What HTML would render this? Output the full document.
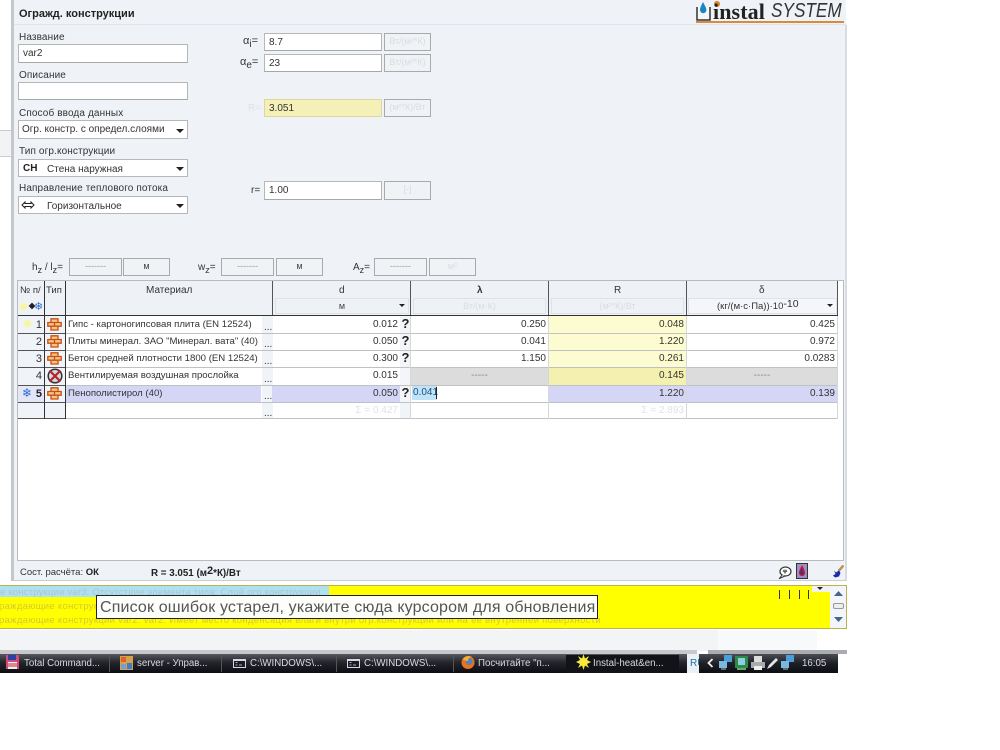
<!DOCTYPE html>
<html><head><meta charset="utf-8"><style>
html,body{margin:0;padding:0;background:#fff}
#r{position:relative;width:1000px;height:750px;overflow:hidden;background:#fff;font-family:"Liberation Sans","DejaVu Sans",sans-serif;font-size:9.5px;color:#333}
#r div,#r svg{position:absolute;box-sizing:border-box}
.t{white-space:nowrap;line-height:12px;margin-top:1px}
.l{font-size:10px;letter-spacing:.12px}
.i{background:#fff;border:1px solid #b4b8b8;border-bottom-color:#a5a8a8;font-size:10px;line-height:18px;padding-left:4px;color:#333;white-space:nowrap}
.u{background:#f0f3f6;border:1px solid #a8abab;color:#d9dde2;font-size:9px;text-align:center;line-height:15px;white-space:nowrap;overflow:hidden}
.s{background:#fff;border:1px solid #b4b8b8;font-size:10px;line-height:18px;padding-left:4px;white-space:nowrap;color:#333}
.a{width:0;height:0;border-left:4px solid transparent;border-right:4px solid transparent;border-top:4px solid #222}
.c{font-size:10px;line-height:18px;white-space:nowrap;overflow:hidden;color:#333}
.m{font-size:9.6px}
.n{text-align:right;padding-right:2px}
.q{font-family:"Liberation Sans",sans-serif;font-weight:bold;font-size:13px;line-height:14px;color:#222;width:9px;text-align:center}
.k{color:#d8dade;font-size:9.7px;line-height:14px;white-space:nowrap}
</style></head><body><div id="r">

<div style="left:11px;top:0;width:3px;height:581px;background:#c5c8cb"></div>
<div style="left:0;top:130px;width:11px;height:27px;background:#f2f3f4;border-top:1px solid #ccc;border-bottom:1px solid #ccc"></div>
<div style="left:14px;top:0;width:832px;height:581px;background:#eff3f8"></div>
<div style="left:845px;top:25px;width:2px;height:556px;background:#d8dce0"></div>
<div style="left:14px;top:24px;width:832px;height:1px;background:#dfe4ea"></div>
<div style="left:14px;top:580px;width:832px;height:1px;background:#c9ccd0"></div>

<div class="t" style="left:19px;top:7px;font-size:11px;font-weight:bold;color:#222">Огражд. конструкции</div>

<!-- logo -->
<svg style="left:696px;top:1px" width="16" height="20" viewBox="0 0 16 20"><path d="M1 6V19H14V6" fill="#f4f6f8" stroke="#333" stroke-width="1.500"/><path d="M7 1C5 5 4 7 4 9a3.200 3.200 0 0 0 6.400 0C10.400 7 9 5 7 1Z" fill="#1c84c4"/></svg>
<div style="left:714px;top:1px;width:6px;height:6px;border-radius:50%;background:#d9822b"></div>
<div style="left:713px;top:2px;font-family:'Liberation Serif',serif;font-weight:bold;font-size:22px;line-height:19px;color:#222;white-space:nowrap;letter-spacing:.1px">instal</div>
<div style="left:771px;top:1px;font-family:'Liberation Sans',sans-serif;font-style:italic;font-size:20px;line-height:20px;color:#333;white-space:nowrap;transform:scaleX(.86);transform-origin:left top">SYSTEM</div>
<div style="left:696px;top:21px;width:148px;height:2px;background:#d98a3a"></div>

<!-- left form -->
<div class="t l" style="left:19px;top:31px">Название</div>
<div class="i" style="left:18px;top:44px;width:170px;height:19px">var2</div>
<div class="t l" style="left:19px;top:69px">Описание</div>
<div class="i" style="left:18px;top:82px;width:170px;height:18px"></div>
<div class="t l" style="left:19px;top:107px">Способ ввода данных</div>
<div class="s" style="left:18px;top:120px;width:170px;height:19px;padding-left:3px">Огр. констр. с определ.слоями</div><div class="a" style="left:176px;top:129px"></div>
<div class="t l" style="left:19px;top:145px">Тип огр.конструкции</div>
<div class="s" style="left:18px;top:159px;width:170px;height:18px"><b style="color:#222">СН</b></div><div class="t" style="left:47px;top:163px;font-size:10px">Стена наружная</div><div class="a" style="left:176px;top:167px"></div>
<div class="t l" style="left:19px;top:182px">Направление теплового потока</div>
<div class="s" style="left:18px;top:196px;width:170px;height:18px"></div><div class="t" style="left:47px;top:200px;font-size:10px">Горизонтальное</div><div class="a" style="left:176px;top:204px"></div>
<svg style="left:21px;top:201px" width="14" height="8" viewBox="0 0 14 8"><path d="M4 1 1 4l3 3V5.500h6V7l3-3-3-3v1.500H4Z" fill="#fff" stroke="#222" stroke-width="1"/></svg>

<!-- right form -->
<div class="t" style="left:243px;top:34px;font-size:11px">α<sub style="font-size:10px;line-height:0">i</sub>=</div>
<div class="i" style="left:264px;top:33px;width:118px;height:18px">8.7</div>
<div class="u" style="left:384px;top:33px;width:47px;height:18px">Вт/(м²*К)</div>
<div class="t" style="left:240px;top:55px;font-size:11px">α<sub style="font-size:10px;line-height:0">e</sub>=</div>
<div class="i" style="left:264px;top:54px;width:118px;height:18px">23</div>
<div class="u" style="left:384px;top:54px;width:47px;height:18px">Вт/(м²*К)</div>
<div class="t" style="left:248px;top:102px;color:#dde1e6;font-size:10px">R=</div>
<div class="i" style="left:264px;top:99px;width:118px;height:18px;background:#f4f0b8;border-color:#d8d8a0">3.051</div>
<div class="u" style="left:384px;top:99px;width:47px;height:18px">(м²*К)/Вт</div>
<div class="t" style="left:251px;top:184px;font-size:10px;color:#333">r=</div>
<div class="i" style="left:264px;top:181px;width:118px;height:19px">1.00</div>
<div class="u" style="left:384px;top:181px;width:47px;height:19px">[-]</div>

<!-- hz row -->
<div class="t" style="left:32px;top:261px;font-size:10px">h<sub style="font-size:9px;line-height:0">z</sub> / l<sub style="font-size:9px;line-height:0">z</sub>=</div>
<div class="u" style="left:69px;top:258px;width:53px;height:18px;color:#999">-------</div>
<div class="u" style="left:123px;top:258px;width:47px;height:18px;color:#444">м</div>
<div class="t" style="left:198px;top:261px;font-size:10px">w<sub style="font-size:9px;line-height:0">z</sub>=</div>
<div class="u" style="left:221px;top:258px;width:53px;height:18px;color:#999">-------</div>
<div class="u" style="left:276px;top:258px;width:47px;height:18px;color:#444">м</div>
<div class="t" style="left:353px;top:261px;font-size:10px">A<sub style="font-size:9px;line-height:0">z</sub>=</div>
<div class="u" style="left:374px;top:258px;width:53px;height:18px;color:#999">-------</div>
<div class="u" style="left:429px;top:258px;width:47px;height:18px">м²</div>

<!-- table frame -->
<div style="left:17px;top:280px;width:827px;height:281px;background:#fff;border:1px solid #b8bcc0"></div>
<div style="left:18px;top:281px;width:820px;height:34px;background:#eef2f7"></div>

<!-- header -->
<div class="t" style="left:20px;top:284px">№ п/</div>
<div class="t" style="left:46px;top:284px">Тип</div>
<div class="t" style="left:146px;top:284px;font-size:10px">Материал</div>
<div class="t" style="left:339px;top:284px;font-size:10px">d</div>
<div class="t" style="left:477px;top:284px;font-size:10px;font-weight:bold">λ</div>
<div class="t" style="left:614px;top:284px;font-size:10px">R</div>
<div class="t" style="left:759px;top:284px;font-size:10px">δ</div>
<div style="left:20px;top:303px;width:7px;height:7px;border-radius:50%;background:#f7f5a0"></div>
<div style="left:29px;top:303px;width:6px;height:6px;background:#222;transform:rotate(45deg) scale(.8)"></div>
<div class="t" style="left:34px;top:300px;font-size:11px;color:#2a6fd0">❄</div>

<div class="u" style="left:275px;top:298px;width:134px;height:16px;background:#eef2f7;border:1px solid #dfe3e8;color:#444;font-size:9px;line-height:15px">м</div><div class="a" style="left:399px;top:304px;border-left-width:3px;border-right-width:3px;border-top-width:3px"></div>
<div class="u" style="left:413px;top:298px;width:133px;height:16px;background:#eef2f7;border:1px solid #dfe3e8;line-height:15px">Вт/(м·К)</div>
<div class="u" style="left:551px;top:298px;width:133px;height:16px;background:#eef2f7;border:1px solid #dfe3e8;line-height:15px">(м²*К)/Вт</div>
<div class="u" style="left:688px;top:298px;width:149px;height:16px;background:#f4f6fa;border:1px solid #dfe3e8;color:#333;font-size:9.500px;line-height:15px;text-align:left;padding-left:28px">(кг/(м·с·Па))·10<span style="font-size:10.500px;position:relative;top:-2px">-10</span></div><div class="a" style="left:827px;top:304px;border-left-width:3px;border-right-width:3px;border-top-width:3px"></div>

<!-- row fills -->
<div style="left:18px;top:316px;width:26px;height:103px;background:#f0f3f7"></div>
<div style="left:45px;top:316px;width:21px;height:103px;background:#f0f3f7"></div>
<div style="left:262px;top:316px;width:11px;height:103px;background:#f0f3f7"></div>
<div style="left:400px;top:316px;width:11px;height:103px;background:#f0f3f7"></div>
<div style="left:400px;top:316px;width:11px;height:86px;background:#f3f5f8"></div>
<div style="left:548px;top:316px;width:138px;height:69px;background:#fdfbd0"></div>
<div style="left:411px;top:368px;width:137px;height:17px;background:#dcdcdc"></div>
<div style="left:687px;top:368px;width:151px;height:17px;background:#dcdcdc"></div>
<div style="left:548px;top:368px;width:138px;height:17px;background:#f4f0b0"></div>
<div style="left:66px;top:385px;width:195px;height:17px;background:#d5d6f6"></div>
<div style="left:272px;top:385px;width:128px;height:17px;background:#d5d6f6"></div>
<div style="left:548px;top:385px;width:290px;height:17px;background:#d5d6f6"></div>
<div style="left:18px;top:385px;width:26px;height:17px;background:#e4e6f6"></div>

<!-- h lines -->
<div style="left:18px;top:315px;width:820px;height:1px;background:#333"></div>
<div style="left:18px;top:333px;width:820px;height:1px;background:#bfc2c5"></div>
<div style="left:18px;top:350px;width:820px;height:1px;background:#bfc2c5"></div>
<div style="left:18px;top:367px;width:820px;height:1px;background:#bfc2c5"></div>
<div style="left:18px;top:385px;width:820px;height:1px;background:#bfc2c5"></div>
<div style="left:18px;top:402px;width:820px;height:1px;background:#bfc2c5"></div>
<div style="left:18px;top:418px;width:820px;height:1px;background:#bfc2c5"></div>
<div style="left:18px;top:333px;width:48px;height:1px;background:#555"></div>
<div style="left:18px;top:350px;width:48px;height:1px;background:#555"></div>
<div style="left:18px;top:367px;width:48px;height:1px;background:#555"></div>
<div style="left:18px;top:385px;width:48px;height:1px;background:#555"></div>
<div style="left:18px;top:402px;width:48px;height:1px;background:#555"></div>
<div style="left:18px;top:418px;width:48px;height:1px;background:#555"></div>
<!-- v lines -->
<div style="left:44px;top:281px;width:1px;height:138px;background:#333"></div>
<div style="left:65px;top:281px;width:1px;height:138px;background:#333"></div>
<div style="left:272px;top:281px;width:1px;height:34px;background:#555"></div>
<div style="left:410px;top:281px;width:1px;height:34px;background:#555"></div>
<div style="left:548px;top:281px;width:1px;height:34px;background:#555"></div>
<div style="left:686px;top:281px;width:1px;height:34px;background:#555"></div>
<div style="left:837px;top:281px;width:1px;height:34px;background:#555"></div>
<div style="left:410px;top:316px;width:1px;height:103px;background:#d5d8db"></div>
<div style="left:548px;top:316px;width:1px;height:103px;background:#d5d8db"></div>
<div style="left:686px;top:316px;width:1px;height:103px;background:#d5d8db"></div>
<div style="left:837px;top:316px;width:1px;height:103px;background:#d5d8db"></div>

<!-- row numbers -->
<div style="left:24px;top:320px;width:7px;height:7px;border-radius:50%;background:#f7f5a0"></div>
<div class="c n" style="left:18px;top:316px;width:26px;font-size:11px">1</div>
<div class="c n" style="left:18px;top:333px;width:26px;font-size:11px">2</div>
<div class="c n" style="left:18px;top:350px;width:26px;font-size:11px">3</div>
<div class="c n" style="left:18px;top:367px;width:26px;font-size:11px">4</div>
<div class="c n" style="left:18px;top:385px;width:26px;font-size:11px;font-weight:bold;color:#223">5</div>
<div class="t" style="left:22px;top:386px;font-size:12px;color:#2a6fd0">❄</div>

<!-- type icons -->
<svg style="left:47px;top:318px" width="15" height="13" viewBox="0 0 15 13"><path d="M4 .8h7v3.700H4zM.8 4.500h6.700v3.700H.8zM7.500 4.500h6.700v3.700H7.500zM4 8.200h7v3.800H4z" fill="#f4c48a" stroke="#c8500f" stroke-width="1.300"/></svg>
<svg style="left:47px;top:335px" width="15" height="13" viewBox="0 0 15 13"><path d="M4 .8h7v3.700H4zM.8 4.500h6.700v3.700H.8zM7.500 4.500h6.700v3.700H7.500zM4 8.200h7v3.800H4z" fill="#f4c48a" stroke="#c8500f" stroke-width="1.300"/></svg>
<svg style="left:47px;top:352px" width="15" height="13" viewBox="0 0 15 13"><path d="M4 .8h7v3.700H4zM.8 4.500h6.700v3.700H.8zM7.500 4.500h6.700v3.700H7.500zM4 8.200h7v3.800H4z" fill="#f4c48a" stroke="#c8500f" stroke-width="1.300"/></svg>
<svg style="left:47px;top:387px" width="15" height="13" viewBox="0 0 15 13"><path d="M4 .8h7v3.700H4zM.8 4.500h6.700v3.700H.8zM7.500 4.500h6.700v3.700H7.500zM4 8.200h7v3.800H4z" fill="#f4c48a" stroke="#c8500f" stroke-width="1.300"/></svg>
<svg style="left:47px;top:368px" width="16" height="16" viewBox="0 0 16 16"><circle cx="8" cy="8" r="6.800" fill="#d8d8e0" stroke="#333" stroke-width="1.500"/><path d="M2.500 2.500 13.500 13.500M13.500 2.500 2.500 13.500" stroke="#b3252a" stroke-width="2.200"/></svg>

<!-- material -->
<div class="c m" style="left:68px;top:316px;width:195px">Гипс - картоногипсовая плита  (EN 12524)</div>
<div class="c m" style="left:68px;top:333px;width:195px">Плиты минерал. ЗАО "Минерал. вата" (40)</div>
<div class="c m" style="left:68px;top:350px;width:195px">Бетон средней плотности 1800 (EN 12524)</div>
<div class="c m" style="left:68px;top:367px;width:195px">Вентилируемая воздушная прослойка</div>
<div class="c m" style="left:68px;top:385px;width:195px">Пенополистирол (40)</div>
<div class="c" style="left:264px;top:319px">...</div><div class="c" style="left:264px;top:336px">...</div><div class="c" style="left:264px;top:353px">...</div><div class="c" style="left:264px;top:371px">...</div><div class="c" style="left:264px;top:388px">...</div><div class="c" style="left:264px;top:405px">...</div>

<!-- d -->
<div class="c n" style="left:273px;top:316px;width:127px">0.012</div>
<div class="c n" style="left:273px;top:333px;width:127px">0.050</div>
<div class="c n" style="left:273px;top:350px;width:127px">0.300</div>
<div class="c n" style="left:273px;top:367px;width:127px">0.015</div>
<div class="c n" style="left:273px;top:385px;width:127px">0.050</div>
<div class="c n" style="left:273px;top:402px;width:127px;color:#dfe2e6">Σ = 0.427</div>
<div class="q" style="left:401px;top:317px">?</div><div class="q" style="left:401px;top:334px">?</div><div class="q" style="left:401px;top:351px">?</div><div class="q" style="left:401px;top:386px">?</div>

<!-- lambda -->
<div class="c n" style="left:411px;top:316px;width:137px">0.250</div>
<div class="c n" style="left:411px;top:333px;width:137px">0.041</div>
<div class="c n" style="left:411px;top:350px;width:137px">1.150</div>
<div class="c" style="left:411px;top:367px;width:137px;text-align:center;color:#888">-----</div>
<div style="left:412px;top:386px;width:25px;height:14px;background:#bfe3f7"></div>
<div class="c" style="left:413px;top:384px;color:#1d4f80">0.041</div>
<div style="left:436px;top:387px;width:1px;height:12px;background:#222"></div>

<!-- R -->
<div class="c n" style="left:549px;top:316px;width:137px">0.048</div>
<div class="c n" style="left:549px;top:333px;width:137px">1.220</div>
<div class="c n" style="left:549px;top:350px;width:137px">0.261</div>
<div class="c n" style="left:549px;top:367px;width:137px">0.145</div>
<div class="c n" style="left:549px;top:385px;width:137px">1.220</div>
<div class="c n" style="left:549px;top:402px;width:137px;color:#dfe2e6">Σ = 2.893</div>

<!-- delta -->
<div class="c n" style="left:687px;top:316px;width:150px">0.425</div>
<div class="c n" style="left:687px;top:333px;width:150px">0.972</div>
<div class="c n" style="left:687px;top:350px;width:150px">0.0283</div>
<div class="c" style="left:687px;top:367px;width:150px;text-align:center;color:#888">-----</div>
<div class="c n" style="left:687px;top:385px;width:150px">0.139</div>

<!-- status -->
<div class="t" style="left:20px;top:566px;font-size:9.500px;color:#333">Сост. расчёта: <b style="color:#222">ОК</b></div>
<div class="t" style="left:151px;top:566px;font-size:9.800px;font-weight:bold;color:#222">R = 3.051 (м<span style="font-size:11px;position:relative;top:-2px">2</span>*К)/Вт</div>
<svg style="left:778px;top:566px" width="14" height="13" viewBox="0 0 14 13"><ellipse cx="7.500" cy="5.500" rx="5.500" ry="4.500" fill="#fff" stroke="#333" stroke-width="1.200"/><path d="M4 9 1.500 12.500 7 10" fill="#fff" stroke="#333"/><path d="M5 6l1-2 1 3 1-3 1 2" fill="none" stroke="#333" stroke-width=".8"/></svg>
<svg style="left:796px;top:563px" width="12" height="16" viewBox="0 0 12 16"><rect x=".5" y=".5" width="11" height="15" fill="#9a8fc6" stroke="#333"/><path d="M6 2C4 6 3 8 3 10a3 3 0 0 0 6 0C9 8 8 6 6 2Z" fill="#c4162a"/><path d="M6 5C5 8 4.500 9 4.500 10.500 4.500 12 7 12 7 10.500Z" fill="#1d3aa8"/></svg>
<svg style="left:832px;top:565px" width="12" height="13" viewBox="0 0 12 13"><path d="M11.500 .5 6.500 6" stroke="#b9925a" stroke-width="2.500"/><path d="M2 5.500 4 7.500 7 5.500 8.500 8 7 11.500 3 12.500 1 10.500 3.500 9Z" fill="#1b2bb0"/></svg>

<!-- error panel -->
<div style="left:0;top:585px;width:847px;height:44px;background:#ff0;border:1px solid #b9b34f;border-left:0"></div>
<div style="left:0;top:586px;width:329px;height:11px;background:#aee0f0"></div>
<div style="left:0;top:587px;font-size:9.500px;line-height:11px;color:#a9c6d4;letter-spacing:.2px;white-space:nowrap">е конструкции var3: Отсутствие элемента типа: Слой огр.конструкции</div>
<div style="left:-1px;top:601px;font-size:9.500px;line-height:11px;color:#d8c830;letter-spacing:.3px;white-space:nowrap">раждающие конструкции</div>
<div style="left:-1px;top:615px;font-size:9.500px;line-height:11px;color:#d8c830;letter-spacing:.3px;white-space:nowrap">раждающие конструкции var2:  var2: Имеет место конденсация влаги внутри огр.конструкции или на ее внутренней поверхности</div>
<div style="left:96px;top:595px;height:24px;width:502px;background:#fdfdfa;border:1px solid #222;font-size:16px;line-height:24px;color:#555;padding-left:3px;letter-spacing:.15px;white-space:nowrap;overflow:hidden">Список ошибок устарел, укажите сюда курсором для обновления</div>
<div style="left:779px;top:590px;width:30px;height:9px;border-left:1px solid #333;border-right:1px solid #333;background:linear-gradient(90deg,transparent 9px,#333 9px,#333 10px,transparent 10px,transparent 19px,#333 19px,#333 20px,transparent 20px)"></div>
<div style="left:812px;top:586px;width:18px;height:6px;background:#f0f3f0"></div><div class="a" style="left:817px;top:587px;border-left-width:3px;border-right-width:3px;border-top-width:3px"></div>
<div style="left:830px;top:586px;width:16px;height:42px;background:#f2f5fa"></div>
<svg style="left:833px;top:590px" width="11" height="36" viewBox="0 0 11 36"><path d="M1 6 5.500 1 10 6Z" fill="#44658c"/><rect x=".5" y="13.500" width="10" height="5" rx="1.500" fill="#eee" stroke="#999"/><path d="M1 27 5.500 32 10 27Z" fill="#44658c"/></svg>

<!-- below panel -->
<div style="left:0;top:630px;width:718px;height:21px;background:#f3f4f6"></div>
<div style="left:718px;top:630px;width:99px;height:21px;background:#f8f9fa"></div>

<!-- taskbar -->
<div style="left:0;top:654px;width:687px;height:19px;background:linear-gradient(#55585e,#23252b 45%,#0c0d12)"></div>
<div style="left:0;top:650px;width:697px;height:4px;background:#c7c8ca"></div>
<div style="left:708px;top:650px;width:139px;height:4px;background:#aaacaf"></div>
<div style="left:687px;top:654px;width:12px;height:19px;background:#e9f1f8;color:#2a6fa0;font-size:10px;line-height:19px;padding-left:3px;overflow:hidden">RU</div>
<div style="left:699px;top:654px;width:139px;height:19px;background:linear-gradient(#4a4d54,#1d1f25 50%,#0d0e12)"></div>

<div style="left:109px;top:655px;width:1px;height:17px;background:#555"></div>
<div style="left:221px;top:655px;width:1px;height:17px;background:#555"></div>
<div style="left:336px;top:655px;width:1px;height:17px;background:#555"></div>
<div style="left:453px;top:655px;width:1px;height:17px;background:#555"></div>
<div style="left:566px;top:655px;width:113px;height:18px;background:#111318"></div>

<svg style="left:6px;top:655px" width="13" height="14" viewBox="0 0 13 14"><rect width="13" height="14" fill="#d5487a"/><rect x="2" y="0" width="8" height="5" fill="#2a3fa8"/><rect x="2" y="7" width="9" height="7" fill="#f0f0f0"/><path d="M2 9h9M2 11h9" stroke="#c22" stroke-width="1"/></svg>
<div class="k" style="left:24px;top:657px">Total Command...</div>
<svg style="left:120px;top:656px" width="13" height="14" viewBox="0 0 13 14"><rect width="13" height="14" fill="#d9a14a"/><rect x="1" y="1" width="5" height="5" fill="#e0622a"/><rect x="7" y="7" width="5" height="6" fill="#3d7fc4"/><rect x="1" y="8" width="5" height="5" fill="#6fa0d8"/></svg>
<div class="k" style="left:137px;top:657px">server - Управ...</div>
<svg style="left:233px;top:659px" width="13" height="9" viewBox="0 0 13 9"><rect width="13" height="9" fill="#d8d8d8"/><rect x="1" y="2" width="11" height="6" fill="#1a1a2a"/><path d="M2.500 3.500h2M2.500 6h2M6 6h3" stroke="#ddd" stroke-width=".8"/></svg>
<div class="k" style="left:250px;top:657px">C:\WINDOWS\...</div>
<svg style="left:347px;top:659px" width="13" height="9" viewBox="0 0 13 9"><rect width="13" height="9" fill="#d8d8d8"/><rect x="1" y="2" width="11" height="6" fill="#1a1a2a"/><path d="M2.500 3.500h2M2.500 6h2M6 6h3" stroke="#ddd" stroke-width=".8"/></svg>
<div class="k" style="left:364px;top:657px">C:\WINDOWS\...</div>
<svg style="left:461px;top:655px" width="14" height="15" viewBox="0 0 14 15"><circle cx="7" cy="7.500" r="6.500" fill="#e8741e"/><circle cx="8" cy="6.500" r="3.500" fill="#5a7fc0"/><path d="M2 4C4 1 8 0 11 2 8 2 7 4 7 6 4 6 3 5 2 4Z" fill="#f0b030"/></svg>
<div class="k" style="left:478px;top:657px">Посчитайте "п...</div>
<svg style="left:576px;top:654px" width="15" height="16" viewBox="0 0 15 16"><path d="M7.500 0 9 4.500 13 2 11 6 15 8 11 10 13 14 9 11.500 7.500 16 6 11.500 2 14 4 10 0 8 4 6 2 2 6 4.500Z" fill="#f7ea3a"/></svg>
<div class="k" style="left:593px;top:657px">Instal-heat&amp;en...</div>

<svg style="left:707px;top:658px" width="7" height="10" viewBox="0 0 7 10"><path d="M5.500 1 1.500 5l4 4" fill="none" stroke="#eee" stroke-width="1.800"/></svg>
<svg style="left:719px;top:655px" width="13" height="15" viewBox="0 0 13 15"><rect x="5" y="0" width="8" height="7" fill="#4b9fd8"/><rect x="0" y="6" width="8" height="7" fill="#7ab8e0"/><path d="M2 14h5" stroke="#9cc"/></svg>
<svg style="left:735px;top:655px" width="13" height="15" viewBox="0 0 13 15"><rect x="0" y="1" width="13" height="12" fill="#2e8a4a"/><rect x="3" y="3" width="7" height="7" fill="#8fd0e0"/><rect x="2" y="13" width="9" height="2" fill="#6a6"/></svg>
<svg style="left:751px;top:656px" width="14" height="14" viewBox="0 0 14 14"><rect x="3" y="0" width="8" height="6" fill="#ddd"/><rect x="0" y="6" width="14" height="6" fill="#aaa"/><rect x="3" y="10" width="8" height="4" fill="#eee"/></svg>
<svg style="left:766px;top:657px" width="12" height="13" viewBox="0 0 12 13"><path d="M1 12 3 8 10 1l2 2-7 7Z" fill="#e4e4e4"/></svg>
<svg style="left:781px;top:655px" width="13" height="15" viewBox="0 0 13 15"><rect x="5" y="0" width="8" height="7" fill="#4b9fd8"/><rect x="0" y="6" width="8" height="7" fill="#7ab8e0"/><path d="M2 14h5" stroke="#9cc"/></svg>
<div class="k" style="left:802px;top:657px">16:05</div>

</div></body></html>
